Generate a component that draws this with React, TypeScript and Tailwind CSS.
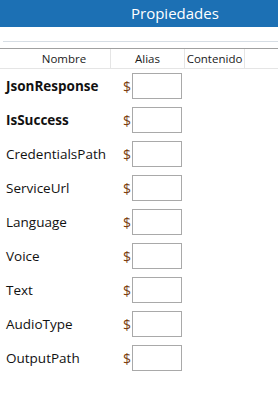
import React from "react";

const rows: { name: string; bold?: boolean }[] = [
  { name: "JsonResponse", bold: true },
  { name: "IsSuccess", bold: true },
  { name: "CredentialsPath" },
  { name: "ServiceUrl" },
  { name: "Language" },
  { name: "Voice" },
  { name: "Text" },
  { name: "AudioType" },
  { name: "OutputPath" },
];

export default function App() {
  return (
    <div
      className="w-[278px] h-[394px] bg-white overflow-hidden"
      style={{ fontFamily: '"Open Sans", "Noto Sans", sans-serif' }}
    >
      <div className="h-[27px] bg-[#1c70b4] text-white text-[15px] leading-[27px] pl-[131px]">
        Propiedades
      </div>
      <div className="h-[14px]" />
      <div className="ml-[3px] h-px bg-[#d6dde4]" />
      <div className="h-[6px]" />
      <div className="h-px bg-[#a0a0a0]" />
      <div className="flex h-[20px] text-[11.5px] leading-[20px] text-[#1a1a1a] bg-white border-b border-[#e5e5e5]">
        <div className="w-[111px] text-center border-r border-[#e5e5e5] pl-[18px]">Nombre</div>
        <div className="w-[74px] text-center border-r border-[#e5e5e5]">Alias</div>
        <div className="w-[60px] text-center border-r border-[#e5e5e5]">Contenido</div>
        <div className="flex-1" />
      </div>
      <div className="flex flex-col">
        {rows.map((r) => (
          <div key={r.name} className="flex items-center h-[34px]">
            <div
              className={
                "w-[123px] pl-[6px] text-[13.5px] text-[#111] " +
                (r.bold ? "font-bold" : "")
              }
            >
              {r.name}
            </div>
            <div className="w-[9px] text-[14px] text-[#7a3d10]">$</div>
            <div className="w-[50px] h-[26px] border border-[#a9a9a9] bg-white" />
          </div>
        ))}
      </div>
    </div>
  );
}
